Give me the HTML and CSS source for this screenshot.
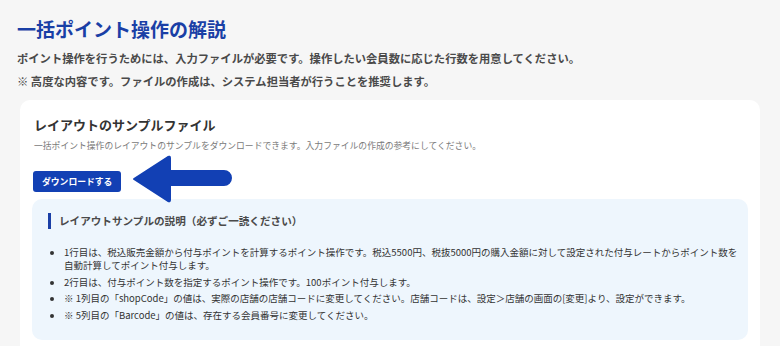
FILE: index.html
```html
<!DOCTYPE html>
<html lang="ja">
<head>
    <meta charset="UTF-8">
    <title>一括ポイント操作の解説</title>
    <link rel="stylesheet" href="styles.css">
</head>
<body>
    <h1 class="page-title">一括ポイント操作の解説</h1>
    <p class="lead">ポイント操作を行うためには、入力ファイルが必要です。操作したい会員数に応じた行数を用意してください。</p>
    <p class="lead">※ 高度な内容です。ファイルの作成は、システム担当者が行うことを推奨します。</p>

    <div class="card">
        <h2 class="card-title">レイアウトのサンプルファイル</h2>
        <p class="card-desc">一括ポイント操作のレイアウトのサンプルをダウンロードできます。入力ファイルの作成の参考にしてください。</p>
        <div class="download-row">
            <button class="btn-download">ダウンロードする</button>
            <svg class="pointer-arrow" width="104" height="50" viewBox="0 0 104 50">
                <path d="M3 24 L37 2 Q39 1 39 3 L39 16 L93 16 A7 7 0 0 1 93 30 L39 30 L39 45 Q39 47 37 46 Z" fill="#1240b4" stroke="#1240b4" stroke-width="2" stroke-linejoin="round"/>
            </svg>
        </div>

        <div class="info-box">
            <h3 class="info-title">レイアウトサンプルの説明（必ずご一読ください）</h3>
            <ul class="info-list">
                <li>1行目は、税込販売金額から付与ポイントを計算するポイント操作です。税込5500円、税抜5000円の購入金額に対して設定された付与レートからポイント数を自動計算してポイント付与します。</li>
                <li>2行目は、付与ポイント数を指定するポイント操作です。100ポイント付与します。</li>
                <li>※ 1列目の「shopCode」の値は、実際の店舗の店舗コードに変更してください。店舗コードは、設定＞店舗の画面の[変更]より、設定ができます。</li>
                <li>※ 5列目の「Barcode」の値は、存在する会員番号に変更してください。</li>
            </ul>
        </div>
    </div>
</body>
</html>
```

FILE: styles.css
```css
body {
    margin: 0;
    padding: 16px 20px 0 17px;
    background: #f6f6f6;
    font-family: "Noto Sans CJK JP", "Noto Sans", sans-serif;
    color: #444;
    overflow: hidden;
}

.page-title {
    margin: 0 0 8px;
    font-size: 19px;
    line-height: 26px;
    font-weight: 700;
    color: #1a3fa6;
}

.lead {
    margin: 0 0 7px;
    font-size: 11.3px;
    line-height: 16px;
    font-weight: 700;
    color: #4a4a4a;
}

.card {
    margin: 11px 0 0 3px;
    background: #fff;
    border-radius: 10px;
    padding: 15px 12px 20px 14px;
}

.card-title {
    margin: 0 0 4px;
    font-size: 13px;
    line-height: 20px;
    font-weight: 700;
    color: #333;
}

.card-desc {
    margin: 0 0 18px;
    font-size: 8.8px;
    line-height: 14px;
    color: #7a7a7a;
}

.download-row {
    position: relative;
    display: flex;
    align-items: flex-start;
    height: 28px;
}

.btn-download {
    margin: 0 0 0 -1px;
    padding: 0 9px;
    height: 21px;
    border: none;
    border-radius: 3px;
    background: #1240b4;
    color: #fff;
    font-family: inherit;
    font-size: 8.8px;
    font-weight: 700;
}

.pointer-arrow {
    position: absolute;
    left: 97px;
    top: -16px;
}

.info-box {
    margin-left: -2px;
    background: #eef6fd;
    border-radius: 10px;
    padding: 14px 8px 15px 16px;
}

.info-title {
    margin: 0 0 17px;
    padding-left: 8px;
    border-left: 3px solid #1a3fa6;
    font-size: 10.6px;
    line-height: 16px;
    font-weight: 700;
    color: #4a4a4a;
}

.info-list {
    margin: 0;
    padding-left: 16px;
    font-size: 9.5px;
    line-height: 13px;
    color: #333;
}

.info-list li {
    margin-bottom: 3.5px;
}
```
